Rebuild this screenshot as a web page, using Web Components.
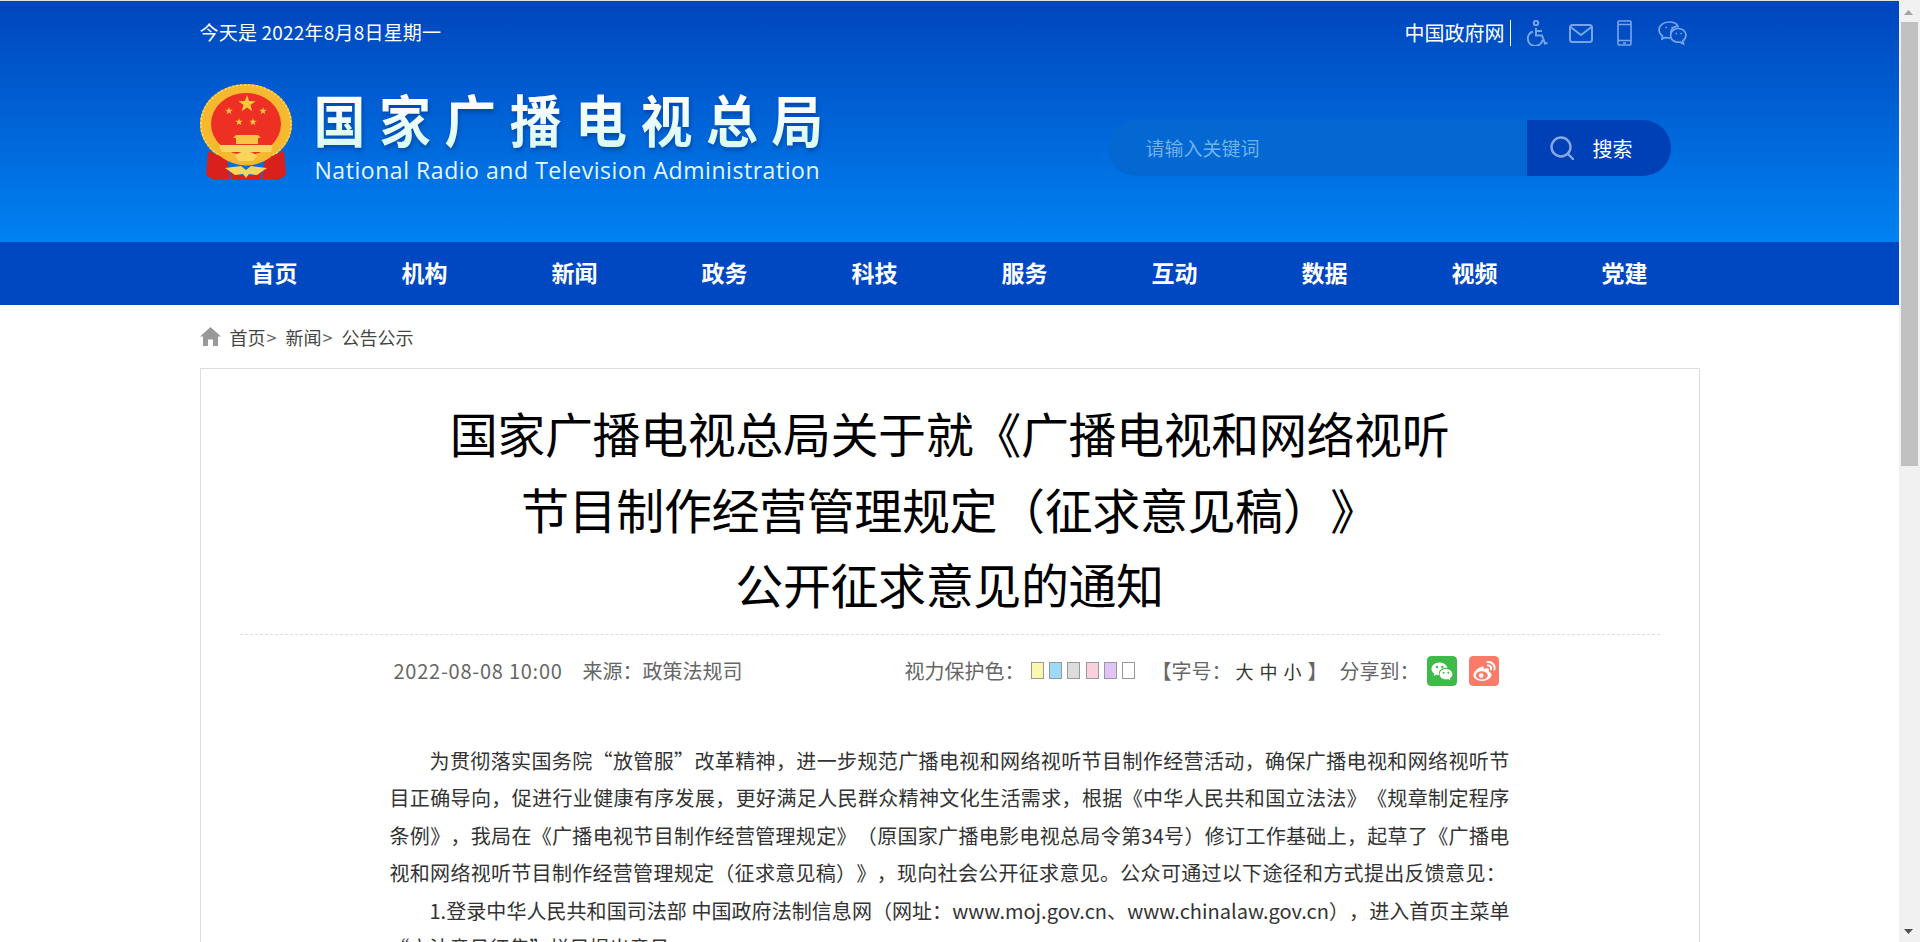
<!DOCTYPE html>
<html lang="zh-CN">
<head>
<meta charset="utf-8">
<title>国家广播电视总局</title>
<style>
    * { box-sizing: border-box; }
    html, body {
        margin: 0;
        height: 942px;
        overflow: hidden;
        background: #fff;
        font-family: "Noto Sans CJK SC", "Liberation Sans", sans-serif;
        text-spacing-trim: space-all;
    }
    .app { display: flex; height: 942px; }
    .main { flex: 1; min-width: 0; overflow: hidden; }
    article-card p { margin: 0; }
    article-card p.plain { letter-spacing: 0; }
</style>
</head>
<body>
<div class="app">
    <div class="main">
        <site-header date="今天是 2022年8月8日星期一"></site-header>
        <site-nav>
            <nav-item>首页</nav-item>
            <nav-item>机构</nav-item>
            <nav-item>新闻</nav-item>
            <nav-item>政务</nav-item>
            <nav-item>科技</nav-item>
            <nav-item>服务</nav-item>
            <nav-item>互动</nav-item>
            <nav-item>数据</nav-item>
            <nav-item>视频</nav-item>
            <nav-item>党建</nav-item>
        </site-nav>
        <bread-crumb></bread-crumb>
        <article-card>
            <span slot="title">国家广播电视总局关于就《广播电视和网络视听<br>节目制作经营管理规定（征求意见稿）》<br>公开征求意见的通知</span>
            <meta-bar slot="meta"></meta-bar>
            <p>为贯彻落实国务院“放管服”改革精神，进一步规范广播电视和网络视听节目制作经营活动，确保广播电视和网络视听节目正确导向，促进行业健康有序发展，更好满足人民群众精神文化生活需求，根据《中华人民共和国立法法》《规章制定程序条例》，我局在《广播电视节目制作经营管理规定》（原国家广播电影电视总局令第34号）修订工作基础上，起草了《广播电视和网络视听节目制作经营管理规定（征求意见稿）》，现向社会公开征求意见。公众可通过以下途径和方式提出反馈意见：</p>
            <p class="plain">1.登录中华人民共和国司法部 中国政府法制信息网（网址：www.moj.gov.cn、www.chinalaw.gov.cn），进入首页主菜单“立法意见征集”栏目提出意见。</p>
        </article-card>
    </div>
    <page-scrollbar></page-scrollbar>
</div>

<script>
    class GovEmblem extends HTMLElement {
        constructor() {
            super()
            this.attachShadow({mode: 'open'})
            const star = (cx, cy, r) => {
                let pts = []
                for (let i = 0; i < 10; i++) {
                    const rad = i % 2 ? r * 0.4 : r
                    const a = -Math.PI / 2 + i * Math.PI / 5
                    pts.push((cx + rad * Math.cos(a)).toFixed(1) + ',' + (cy + rad * Math.sin(a)).toFixed(1))
                }
                return `<polygon points="${pts.join(' ')}" fill="#f8c93c"/>`
            }
            this.shadowRoot.innerHTML = /*html */`
                <style>
                    :host { display: block; width: 95px; height: 98px; }
                    svg { display: block; }
                </style>
                <svg width="95" height="98" viewBox="0 0 95 98">
                    <ellipse cx="46" cy="41" rx="46" ry="40" fill="#f5b82e"/>
                    <ellipse cx="46" cy="41" rx="45" ry="39" fill="none" stroke="#fbd45a" stroke-width="2" stroke-dasharray="2 2"/>
                    <ellipse cx="46" cy="41" rx="35" ry="31" fill="#ee2f24"/>
                    ${star(47, 21, 9)}
                    ${star(29, 28, 4)}
                    ${star(63, 28, 4)}
                    ${star(39, 39, 4)}
                    ${star(53, 39, 4)}
                    <path d="M36 52 H58 L61 55 H58 V61 H36 V55 H33 Z" fill="#f6c544"/>
                    <path d="M19 62 H73 L71 69 H22 Z" fill="#f9d463"/>
                    <path d="M8 68 L27 76 L30 96 L14 97 L6 92 Z" fill="#d9201c"/>
                    <path d="M84 68 L65 76 L62 96 L78 97 L86 92 Z" fill="#d9201c"/>
                    <path d="M30 88 Q46 97 62 88 L60 97 H32 Z" fill="#d9201c"/>
                    <path d="M25 71 Q46 82 67 71 L71 74 Q46 91 21 74 Z" fill="#f5b82e"/>
                    <path d="M35 73 Q40 68 46 69 Q52 68 57 73 L53 78 H39 Z" fill="#fbd45a"/>
                    <path d="M25 85 L41 83 L46 87 L51 83 L67 85 L57 92 L49 91 L46 95 L43 91 L35 92 Z" fill="#fbd45a"/>
                </svg>
            `
        }
    }
    customElements.define('gov-emblem', GovEmblem)

    class SearchBox extends HTMLElement {
        constructor() {
            super()
            this.attachShadow({mode: 'open'})
            this.shadowRoot.innerHTML = /*html */`
                <style>
                    * { box-sizing: border-box; }
                    :host {
                        display: flex;
                        width: 563px;
                        height: 56px;
                        border-radius: 28px;
                        overflow: hidden;
                        background: #0368d2;
                    }
                    .input {
                        width: 419px;
                        padding-left: 38px;
                        font-size: 19px;
                        line-height: 56px;
                        color: #70b2ee;
                    }
                    .btn {
                        flex: 1;
                        display: flex;
                        align-items: center;
                        padding-left: 23px;
                        gap: 19px;
                        background: #0040b6;
                        color: #fff;
                        font-size: 20px;
                    }
                </style>
                <div class="input">请输入关键词</div>
                <div class="btn">
                    <svg width="24" height="24" viewBox="0 0 24 24" fill="none" stroke="#86a9e2" stroke-width="2.4">
                        <circle cx="11" cy="11" r="9.5"/>
                        <path d="M18 18 L23 23" stroke-linecap="round"/>
                    </svg>
                    <span>搜索</span>
                </div>
            `
        }
    }
    customElements.define('search-box', SearchBox)

    class SiteHeader extends HTMLElement {
        constructor() {
            super()
            this.attachShadow({mode: 'open'})
            this.shadowRoot.innerHTML = /*html */`
                <style>
                    :host {
                        display: block;
                        height: 242px;
                        border-top: 1px solid #e2e2e2;
                        background: linear-gradient(180deg, #0045bc 0%, #0082f2 100%);
                        color: #fff;
                    }
                    .wrap { width: 1500px; margin: 0 auto; }
                    .top {
                        height: 64px;
                        display: flex;
                        align-items: center;
                        justify-content: space-between;
                        padding-right: 13px;
                    }
                    .date { font-size: 19px; letter-spacing: 0.2px; margin-bottom: 3px; }
                    .links { display: flex; align-items: center; }
                    .gov {
                        font-size: 20px;
                        line-height: 26px;
                        padding-right: 5px;
                        border-right: 1px solid #fff;
                        margin-right: 15px;
                    }
                    .links svg { display: block; margin-right: 21px; }
                    .links svg:last-child { margin-right: 0; }
                    .brand { display: flex; justify-content: space-between; padding-right: 29px; }
                    .logo { display: flex; margin-top: 18px; }
                    .words { margin-left: 19px; margin-top: 4px; }
                    .cn {
                        font-size: 52px;
                        line-height: 68px;
                        font-weight: 700;
                        letter-spacing: 13.4px;
                        white-space: nowrap;
                        background: linear-gradient(180deg, #ffffff 20%, #dcfaf2 85%);
                        -webkit-background-clip: text;
                        background-clip: text;
                        color: transparent;
                        filter: drop-shadow(1px 3px 2px rgba(0, 40, 120, 0.45));
                        transform: scaleY(1.08);
                        transform-origin: center bottom;
                    }
                    .en {
                        font-family: "Open Sans", sans-serif;
                        font-size: 23px;
                        line-height: 28px;
                        letter-spacing: 0.55px;
                        color: #e6f6fc;
                        white-space: nowrap;
                        margin: 1px 0 0 1px;
                    }
                    search-box { margin-top: 55px; }
                </style>
                <div class="wrap">
                    <div class="top">
                        <div class="date">${this.getAttribute('date') || ''}</div>
                        <div class="links">
                            <span class="gov">中国政府网</span>
                            <svg width="22" height="26" viewBox="0 0 22 26" fill="none" stroke="#78a5ea" stroke-width="2">
                                <circle cx="10" cy="3" r="2.2"/>
                                <path d="M10 8 V15.5 H16 L19 23.5 L21.5 23"/>
                                <path d="M10 11 H16"/>
                                <path d="M7 11.5 A7.4 7.4 0 1 0 16.5 20"/>
                            </svg>
                            <svg width="24" height="19" viewBox="0 0 24 19" fill="none" stroke="#78a5ea" stroke-width="2" style="margin-right:24px">
                                <rect x="1" y="1" width="22" height="17" rx="2.5"/>
                                <path d="M1.5 3 L12 11 L22.5 3"/>
                            </svg>
                            <svg width="15" height="26" viewBox="0 0 15 26" fill="none" stroke="#78a5ea" stroke-width="1.6" style="margin-right:26px">
                                <rect x="1" y="1" width="13" height="24" rx="1"/>
                                <path d="M1 4.5 H14 M1 20.5 H14 M6 23 H9"/>
                            </svg>
                            <svg width="29" height="24" viewBox="0 0 29 24" fill="none" stroke="#78a5ea" stroke-width="1.7">
                                <path d="M13 13.5 C12 8 16 5 20 5.5 C19 2.5 15 1 11 1 C5 1 1 4.5 1 9 C1 11.5 2.5 13.5 4.5 15 L4 18 L7.5 16.5 C9 17 10.5 17 12 17"/>
                                <path d="M20 7.5 C24.5 7.5 28 10.5 28 14.3 C28 16.8 26.5 18.6 24.8 20 L25.5 23 L22 21 C17 22 12.5 19 12.5 14.5 C12.5 10.5 16 7.5 20 7.5 Z"/>
                                <path d="M7.5 6.5 H9 M13.5 6.5 H15 M17.5 12.5 H19 M22.5 12.5 H24"/>
                            </svg>
                        </div>
                    </div>
                    <div class="brand">
                        <div class="logo">
                            <gov-emblem></gov-emblem>
                            <div class="words">
                                <div class="cn">国家广播电视总局</div>
                                <div class="en">National Radio and Television Administration</div>
                            </div>
                        </div>
                        <search-box></search-box>
                    </div>
                </div>
            `
        }
    }
    customElements.define('site-header', SiteHeader)

    class SiteNav extends HTMLElement {
        constructor() {
            super()
            this.attachShadow({mode: 'open'})
            this.shadowRoot.innerHTML = /*html */`
                <style>
                    :host { display: block; height: 63px; background: #0048c2; }
                    .wrap { width: 1500px; margin: 0 auto; display: flex; }
                </style>
                <div class="wrap"><slot></slot></div>
            `
        }
    }
    customElements.define('site-nav', SiteNav)

    class NavItem extends HTMLElement {
        constructor() {
            super()
            this.attachShadow({mode: 'open'})
            this.shadowRoot.innerHTML = /*html */`
                <style>
                    :host {
                        display: block;
                        flex: 1;
                        text-align: center;
                        line-height: 60px;
                        font-size: 23px;
                        font-weight: 700;
                        color: #fff;
                    }
                </style>
                <slot></slot>
            `
        }
    }
    customElements.define('nav-item', NavItem)

    class BreadCrumb extends HTMLElement {
        constructor() {
            super()
            this.attachShadow({mode: 'open'})
            this.shadowRoot.innerHTML = /*html */`
                <style>
                    :host {
                        display: flex;
                        align-items: center;
                        width: 1500px;
                        height: 63px;
                        margin: 0 auto;
                        font-size: 18px;
                        color: #444;
                    }
                    svg { margin-right: 9px; }
                    span { margin-right: 9px; }
                    i { font-style: normal; color: #666; margin-left: 1px; }
                </style>
                <svg width="21" height="19" viewBox="0 0 21 19" fill="#999">
                    <path d="M10.5 0 L21 9.5 L18 9.5 V19 H13 V12.5 H8 V19 H3 V9.5 L0 9.5 Z"/>
                </svg>
                <span>首页<i>&gt;</i></span>
                <span>新闻<i>&gt;</i></span>
                <span>公告公示</span>
            `
        }
    }
    customElements.define('bread-crumb', BreadCrumb)

    class ArticleCard extends HTMLElement {
        constructor() {
            super()
            this.attachShadow({mode: 'open'})
            this.shadowRoot.innerHTML = /*html */`
                <style>
                    :host {
                        display: block;
                        width: 1500px;
                        margin: 0 auto;
                        border: 1px solid #ddd;
                        padding: 26px 39px 40px;
                    }
                    .title {
                        text-align: center;
                        font-size: 48px;
                        letter-spacing: -0.4px;
                        line-height: 75.5px;
                        color: #000;
                        padding-bottom: 12px;
                        border-bottom: 1px dashed #ddd;
                    }
                    .body {
                        width: 1120px;
                        margin: 35px 0 0 150px;
                        font-size: 20px;
                        letter-spacing: 0.3px;
                        line-height: 37.6px;
                        color: #333;
                        text-align: justify;
                    }
                    ::slotted(p) { text-indent: 2em; }
                </style>
                <div class="title"><slot name="title"></slot></div>
                <slot name="meta"></slot>
                <div class="body"><slot></slot></div>
            `
        }
    }
    customElements.define('article-card', ArticleCard)

    class MetaBar extends HTMLElement {
        constructor() {
            super()
            this.attachShadow({mode: 'open'})
            const swatches = ['#fbf6b0', '#9ed9f5', '#dcdcdc', '#f9d0dc', '#e0c4f5', '#ffffff']
            this.shadowRoot.innerHTML = /*html */`
                <style>
                    * { box-sizing: border-box; }
                    :host {
                        display: flex;
                        align-items: center;
                        height: 72px;
                        padding-left: 154px;
                        color: #666;
                        font-size: 20px;
                        white-space: nowrap;
                    }
                    .time { width: 189px; letter-spacing: 0.75px; }
                    .source { width: 322px; }
                    .label { width: 126px; }
                    .swatches { display: flex; gap: 5.4px; width: 121px; }
                    .swatches b { display: block; flex: none; width: 13px; height: 17px; border: 1px solid #999; }
                    .size { width: 188px; }
                    .size em { font-style: normal; font-size: 18px; color: #333; margin: 0 3px; }
                    .size em:first-of-type { margin-left: 4px; }
                    .size em:last-of-type { margin-right: 6px; }
                    .share { width: 87px; }
                    .tile {
                        width: 30px;
                        height: 30px;
                        border-radius: 4px;
                        display: block;
                    }
                    .weibo { margin-left: 12px; }
                </style>
                <span class="time">2022-08-08 10:00</span>
                <span class="source">来源：政策法规司</span>
                <span class="label">视力保护色：</span>
                <span class="swatches">${swatches.map(c => `<b style="background:${c}"></b>`).join('')}</span>
                <span class="size">【字号：<em>大</em><em>中</em><em>小</em>】</span>
                <span class="share">分享到：</span>
                <svg class="tile" viewBox="0 0 30 30">
                    <rect width="30" height="30" rx="4" fill="#3dba48"/>
                    <path d="M12.5 6.5 C7.5 6.5 4.5 9.6 4.5 13 C4.5 15 5.6 16.6 7.3 17.8 L6.6 20 L9.3 18.7 C10.2 19 11 19.1 12 19.2 C11 14.5 14.7 11.5 20.5 11.8 C19.6 8.7 16.4 6.5 12.5 6.5 Z" fill="#fff"/>
                    <path d="M19 13 C15 13 12.6 15.4 12.6 18.2 C12.6 21.2 15.4 23.4 19 23.4 C19.8 23.4 20.4 23.3 21.2 23.1 L23.3 24.2 L22.8 22.3 C24.4 21.2 25.4 19.9 25.4 18.2 C25.4 15.4 22.6 13 19 13 Z" fill="#fff"/>
                    <circle cx="10" cy="11" r="1.2" fill="#3dba48"/>
                    <circle cx="15.3" cy="11" r="1.2" fill="#3dba48"/>
                    <circle cx="16.6" cy="16.8" r="1" fill="#3dba48"/>
                    <circle cx="21.4" cy="16.8" r="1" fill="#3dba48"/>
                </svg>
                <svg class="tile weibo" viewBox="0 0 30 30">
                    <rect width="30" height="30" rx="4" fill="#fb7b68"/>
                    <path d="M13 10.5 C8.5 12 4.5 16 4.5 19.3 C4.5 22.6 8.6 25 13 25 C18.4 25 22.5 21.8 22.5 18.8 C22.5 17 21 16.1 19.8 15.8 C20.4 14.2 20.2 13 19.2 12.5 C18 11.9 16.2 12.4 14.6 13.2 C15 11.5 14.8 10 13 10.5 Z" fill="#fff"/>
                    <ellipse cx="12.8" cy="19.4" rx="6" ry="4.2" fill="#fb7b68"/>
                    <circle cx="12.2" cy="19.6" r="2.3" fill="#fff"/>
                    <path d="M18.5 6 C23 5.4 26.4 9 25.4 13.6 M18.8 9.5 C21.2 9.2 22.6 11 22 13.2" fill="none" stroke="#fff" stroke-width="2" stroke-linecap="round"/>
                </svg>
            `
        }
    }
    customElements.define('meta-bar', MetaBar)

    class PageScrollbar extends HTMLElement {
        constructor() {
            super()
            this.attachShadow({mode: 'open'})
            this.shadowRoot.innerHTML = /*html */`
                <style>
                    :host {
                        display: block;
                        position: relative;
                        flex: 0 0 21px;
                        height: 942px;
                        background: #f1f1f1;
                    }
                    .thumb { position: absolute; left: 2px; top: 22px; width: 17px; height: 444px; background: #c1c1c1; }
                    svg { position: absolute; left: 5px; }
                </style>
                <svg style="top:10px" width="9" height="5" viewBox="0 0 9 5"><path d="M4.5 0 L9 5 H0 Z" fill="#a3a3a3"/></svg>
                <div class="thumb"></div>
                <svg style="top:929px" width="9" height="5" viewBox="0 0 9 5"><path d="M0 0 H9 L4.5 5 Z" fill="#505050"/></svg>
            `
        }
    }
    customElements.define('page-scrollbar', PageScrollbar)
</script>
</body>
</html>
